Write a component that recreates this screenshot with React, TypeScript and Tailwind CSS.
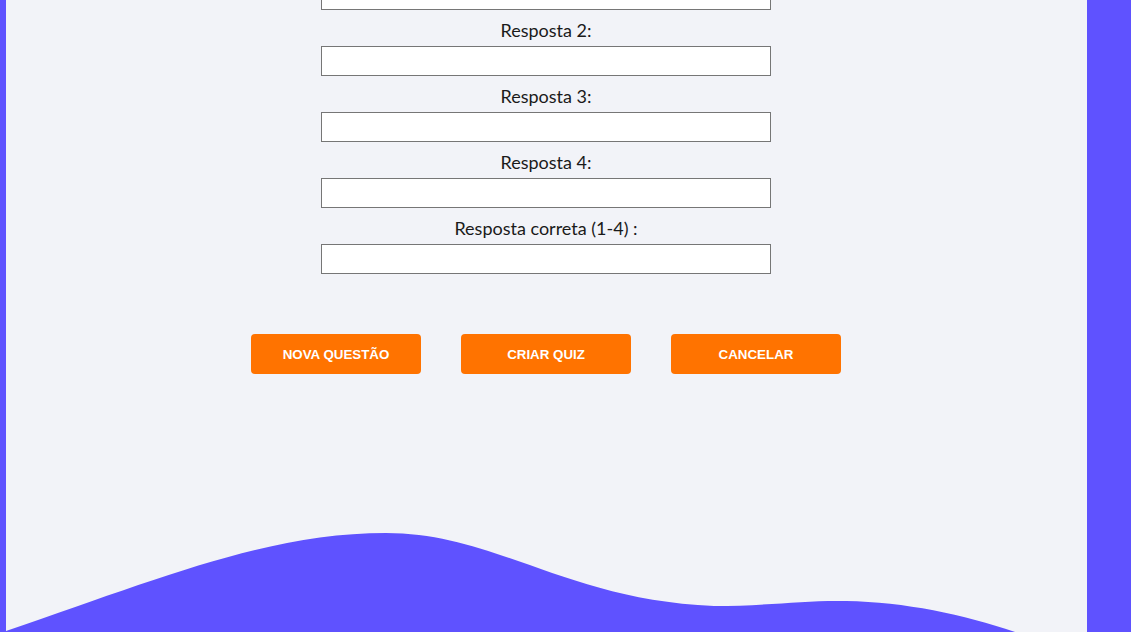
import React from "react";

function Field({ label }: { label: string }) {
  return (
    <div className="flex flex-col items-center">
      <label className="mt-[8px] mb-[4px] text-[18px] leading-[24px] text-[#1a1a1a] font-['Lato',sans-serif]">
        {label}
      </label>
      <input className="w-[450px] h-[30px] bg-white border border-[#767676] outline-none" />
    </div>
  );
}

export default function App() {
  return (
    <div className="w-[1131px] h-[632px] overflow-hidden flex bg-[#5f52ff]">
      <div className="w-[6px] shrink-0 bg-[#5f52ff]" />
      <main className="relative flex-1 bg-[#f2f3f8] overflow-hidden">
        <div className="flex flex-col items-center mt-[-20px] pr-[1px]">
          <input className="w-[450px] h-[30px] bg-white border border-[#767676] outline-none" />
          <Field label="Resposta 2:" />
          <Field label="Resposta 3:" />
          <Field label="Resposta 4:" />
          <Field label="Resposta correta (1-4) :" />
          <div className="mt-[60px] flex gap-[40px]">
            {["NOVA QUESTÃO", "CRIAR QUIZ", "CANCELAR"].map((t) => (
              <button
                key={t}
                className="w-[170px] h-[40px] pt-[1px] rounded-[4px] bg-[#ff7300] text-white text-[13.33px] font-bold font-['Liberation_Sans',Arial,sans-serif]"
              >
                {t}
              </button>
            ))}
          </div>
        </div>
        <svg
          className="absolute left-0 bottom-0"
          width="1081"
          height="132"
          viewBox="0 0 1081 132"
        >
          <path
            d="M0 131 C150 80, 260 33, 380 33 C490 33, 560 100, 708 106 C760 106, 800 100, 840 101 C900 102, 960 115, 1012 133 L1012 140 L0 140 Z"
            fill="#5f52ff"
          />
        </svg>
      </main>
      <div className="w-[44px] shrink-0 bg-[#5f52ff]" />
    </div>
  );
}
